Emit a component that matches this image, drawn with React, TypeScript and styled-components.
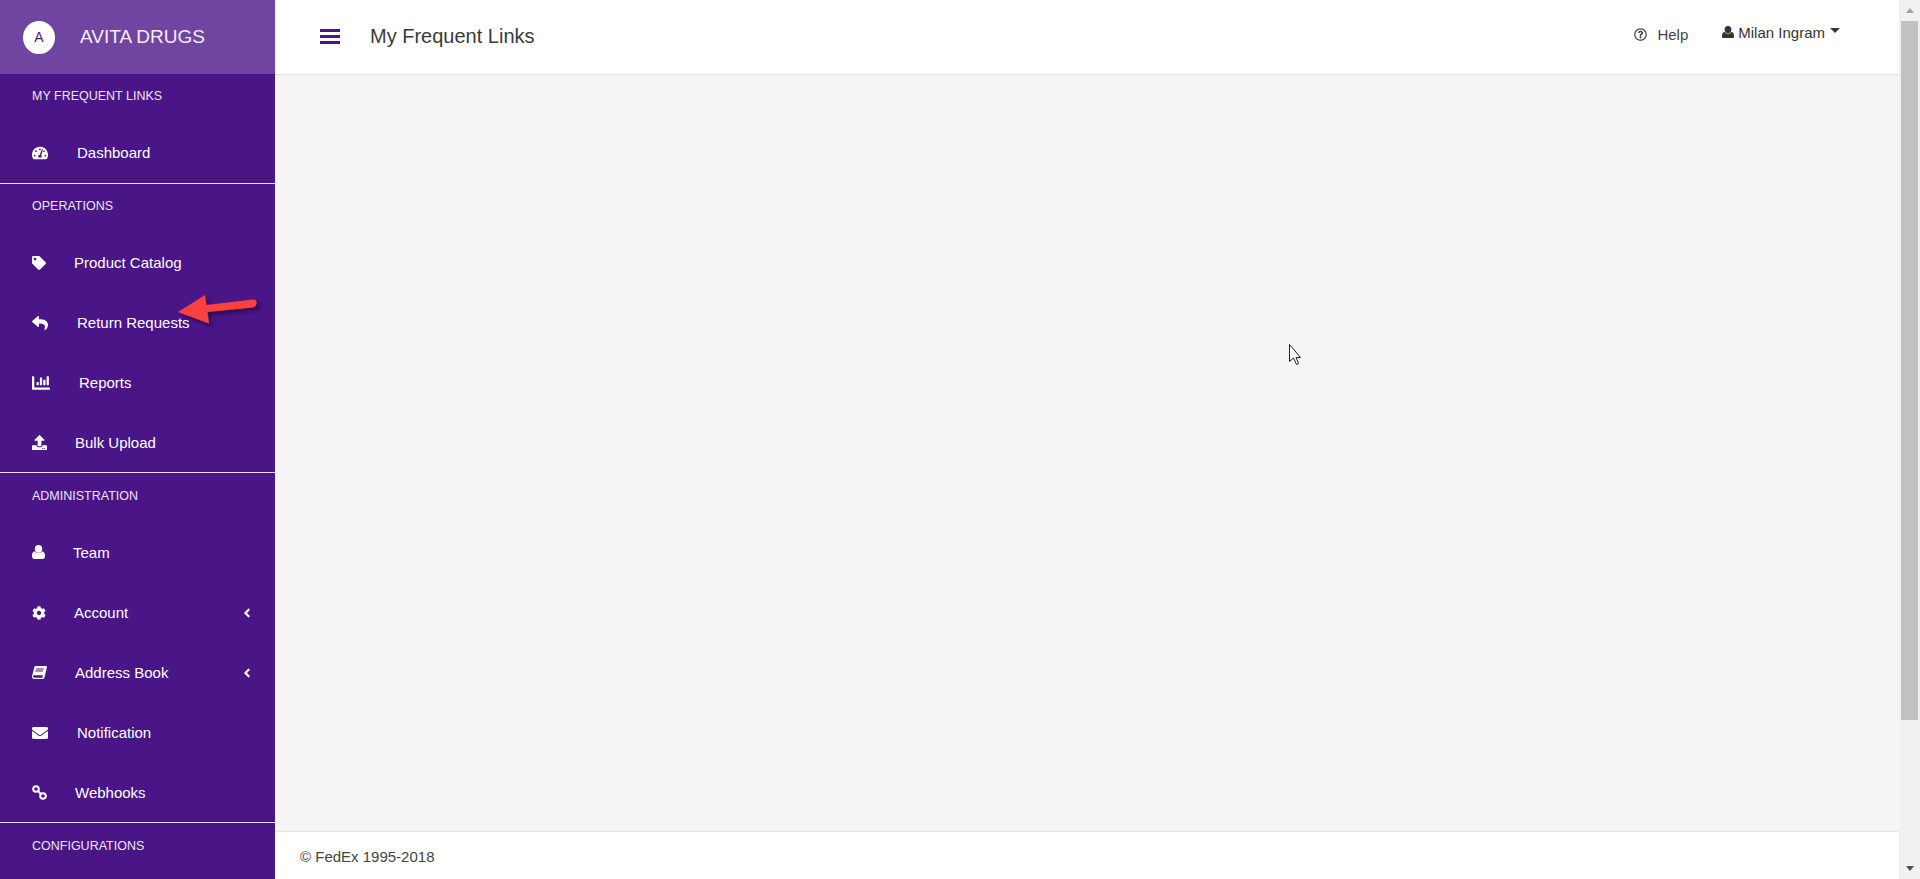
import React from "react";
import styled, { createGlobalStyle } from "styled-components";
import {
  FaTachometerAlt,
  FaTag,
  FaReply,
  FaChartBar,
  FaUpload,
  FaCog,
  FaEnvelope,
  FaAngleLeft,
  FaRegQuestionCircle,
} from "react-icons/fa";

const Global = createGlobalStyle`
  html, body { margin: 0; padding: 0; height: 879px; overflow: hidden; }
  body { font-family: "Liberation Sans", Arial, sans-serif; color: #333; }
  * { box-sizing: border-box; }
`;

const Page = styled.div`
  position: relative;
  display: grid;
  grid-template-columns: 275px 1fr 21px;
  height: 879px;
  overflow: hidden;
`;

const Sidebar = styled.aside`
  background: #4a1586;
  color: #fff;
  height: 879px;
  overflow: hidden;
`;

const Brand = styled.div`
  height: 74px;
  background: #7045a1;
  display: flex;
  align-items: center;
  padding-left: 23px;
`;

const Avatar = styled.span`
  width: 32px;
  height: 33px;
  border-radius: 50%;
  background: #fff;
  color: #4a1586;
  font-size: 14px;
  display: flex;
  align-items: center;
  justify-content: center;
  margin-right: 25px;
`;

const BrandName = styled.span`
  font-size: 19px;
  color: #f3eef8;
`;

const Section = styled.section<{ $divided?: boolean; $h?: number }>`
  height: ${(p) => (p.$h ? `${p.$h}px` : "auto")};
  border-bottom: ${(p) => (p.$divided ? "1px solid #e6dff0" : "0")};
`;

const SectionTitle = styled.div<{ $tall?: boolean }>`
  height: ${(p) => (p.$tall ? 50 : 49)}px;
  padding: ${(p) => (p.$tall ? 16 : 15)}px 0 0 32px;
  font-size: 12.5px;
  line-height: 15px;
  text-transform: uppercase;
  color: #ece6f4;
`;

const NavRow = styled.a`
  height: 60px;
  display: flex;
  align-items: center;
  padding: 0 21px 1px 32px;
  font-size: 15px;
  color: #fff;
`;

const NavIcon = styled.span<{ $w: number }>`
  width: ${(p) => p.$w}px;
  margin-right: 29px;
  flex: none;
  display: flex;
  align-items: center;
  justify-content: flex-start;
  color: #fff;
  svg { display: block; flex: none; }
`;

const NavLabel = styled.span`
  flex: 1;
`;

const Main = styled.main`
  display: flex;
  flex-direction: column;
  min-width: 0;
`;

const TopBar = styled.header`
  height: 75px;
  flex: none;
  background: #fff;
  border-bottom: 1px solid #e7e7e7;
  display: flex;
  align-items: center;
  padding-left: 45px;
`;

const Burger = styled.span`
  width: 20px;
  height: 15px;
  margin-right: 30px;
  display: flex;
  flex-direction: column;
  justify-content: space-between;
  margin-top: -1px;
`;

const BurgerBar = styled.i`
  display: block;
  height: 3px;
  background: #4a1586;
`;

const PageTitle = styled.h1`
  margin: -2px 0 0;
  font-size: 20px;
  font-weight: 400;
  color: #3a3a3a;
  flex: 1;
`;

const HelpLink = styled.a`
  display: flex;
  align-items: center;
  gap: 10px;
  font-size: 15px;
  color: #444;
  margin-right: 34px;
  margin-top: -6px;
`;

const UserMenu = styled.a`
  display: flex;
  align-items: center;
  font-size: 15px;
  color: #333;
  margin-right: 59px;
  margin-top: -10px;
`;

const UserName = styled.span`
  margin: 0 5px 0 4px;
`;

const Caret = styled.span`
  width: 0;
  height: 0;
  border-left: 5px solid transparent;
  border-right: 5px solid transparent;
  border-top: 5px solid #333;
  margin-top: -3px;
`;

const Content = styled.div`
  flex: 1;
  background: #f5f5f5;
`;

const Footer = styled.footer`
  height: 48px;
  flex: none;
  background: #fff;
  border-top: 1px solid #e7e7e7;
  padding: 16px 0 0 25px;
  font-size: 15px;
  line-height: 17px;
  color: #444;
`;

const Scrollbar = styled.div`
  background: #f1f1f1;
  display: flex;
  flex-direction: column;
  align-items: center;
`;

const ScrollButton = styled.div`
  height: 21px;
  width: 100%;
  flex: none;
  display: flex;
  align-items: center;
  justify-content: center;
`;

const ScrollThumb = styled.div`
  width: 17px;
  height: 699px;
  flex: none;
  background: #c1c1c1;
`;

const ScrollTrack = styled.div`
  flex: 1;
`;

const ArrowUp = styled.span`
  width: 0;
  height: 0;
  border-left: 4.5px solid transparent;
  border-right: 4.5px solid transparent;
  border-bottom: 5px solid #a3a3a3;
`;

const ArrowDown = styled.span`
  width: 0;
  height: 0;
  border-left: 4.5px solid transparent;
  border-right: 4.5px solid transparent;
  border-top: 5px solid #505050;
`;

const Annotation = styled.svg`
  position: absolute;
  left: 170px;
  top: 285px;
  overflow: visible;
`;

const Pointer = styled.svg`
  position: absolute;
  left: 1288px;
  top: 343px;
`;

const BookIcon = ({ size = 15 }: { size?: number }) => (
  <svg width={size} height={size * 0.87} viewBox="0 0 15 13" fill="currentColor">
    <path d="M3.4 0H14a1 1 0 0 1 .9 1.2L12.5 11.4a2 2 0 0 1-1.9 1.6H2C.7 13 0 11.9 0 10.6c0-.4.1-.8.2-1.1L2.4 1A1.3 1.3 0 0 1 3.4 0zM4.2 2.4l-.3 1h7.6l.3-1zM3.5 4.6l-.3 1h7.6l.3-1zM2.4 9.3c-.9 0-1.3.5-1.3 1.2 0 .7.4 1.2 1.2 1.2h8.1l.5-2.4z" fillRule="evenodd" />
  </svg>
);

const LinkIcon = ({ size = 15 }: { size?: number }) => (
  <svg width={size} height={size} viewBox="0 0 15 15" fill="none" stroke="currentColor" strokeWidth="2">
    <circle cx="4" cy="4" r="2.8" />
    <circle cx="11" cy="11" r="2.8" />
    <path d="M5.8 5.8l3.4 3.4" />
  </svg>
);

const BustIcon = ({ width = 13, color = "currentColor" }: { width?: number; color?: string }) => (
  <svg width={width} height={width * 1.08} viewBox="0 0 13 14" fill={color}>
    <ellipse cx="6.5" cy="3.9" rx="3.7" ry="3.9" />
    <path d="M0 11.3C0 8.6.8 6.6 2.7 6.6c.9 1 2.2 1.7 3.8 1.7s2.9-.7 3.8-1.7c1.9 0 2.7 2 2.7 4.7 0 1.6-1 2.7-2.4 2.7H2.4C1 14 0 12.9 0 11.3z" />
  </svg>
);

type Item = { label: string; w: number; icon: React.ReactNode; more?: boolean };
type Group = { title: string; items: Item[]; divided?: boolean; h?: number; tall?: boolean };

const groups: Group[] = [
  {
    title: "My Frequent Links",
    divided: true,
    h: 110,
    items: [{ label: "Dashboard", w: 16, icon: <FaTachometerAlt size={16} /> }],
  },
  {
    title: "Operations",
    divided: true,
    h: 289,
    items: [
      { label: "Product Catalog", w: 13, icon: <FaTag size={14} /> },
      { label: "Return Requests", w: 16, icon: <FaReply size={16} /> },
      { label: "Reports", w: 18, icon: <FaChartBar size={18} /> },
      { label: "Bulk Upload", w: 14, icon: <FaUpload size={15} /> },
    ],
  },
  {
    title: "Administration",
    tall: true,
    divided: true,
    h: 350,
    items: [
      { label: "Team", w: 12, icon: <BustIcon /> },
      { label: "Account", w: 13, icon: <FaCog size={14} />, more: true },
      { label: "Address Book", w: 14, icon: <BookIcon />, more: true },
      { label: "Notification", w: 16, icon: <FaEnvelope size={16} /> },
      { label: "Webhooks", w: 14, icon: <LinkIcon /> },
    ],
  },
  { title: "Configurations", tall: true, items: [] },
];

export default function App() {
  return (
    <>
      <Global />
      <Page>
        <Sidebar>
          <Brand>
            <Avatar>A</Avatar>
            <BrandName>AVITA DRUGS</BrandName>
          </Brand>
          {groups.map((g) => (
            <Section key={g.title} $divided={g.divided} $h={g.h}>
              <SectionTitle $tall={g.tall}>{g.title}</SectionTitle>
              {g.items.map((it) => (
                <NavRow key={it.label}>
                  <NavIcon $w={it.w}>{it.icon}</NavIcon>
                  <NavLabel>{it.label}</NavLabel>
                  {it.more && <FaAngleLeft size={14} />}
                </NavRow>
              ))}
            </Section>
          ))}
        </Sidebar>
        <Main>
          <TopBar>
            <Burger>
              <BurgerBar />
              <BurgerBar />
              <BurgerBar />
            </Burger>
            <PageTitle>My Frequent Links</PageTitle>
            <HelpLink>
              <FaRegQuestionCircle size={13} />
              Help
            </HelpLink>
            <UserMenu>
              <BustIcon width={12} color="#333" />
              <UserName>Milan Ingram</UserName>
              <Caret />
            </UserMenu>
          </TopBar>
          <Content />
          <Footer>© FedEx 1995-2018</Footer>
        </Main>
        <Scrollbar>
          <ScrollButton>
            <ArrowUp />
          </ScrollButton>
          <ScrollThumb />
          <ScrollTrack />
          <ScrollButton>
            <ArrowDown />
          </ScrollButton>
        </Scrollbar>
        <Annotation width="90" height="42" viewBox="0 0 90 42">
          <defs>
            <filter id="arrowShadow" x="-20%" y="-30%" width="150%" height="170%">
              <feDropShadow dx="3" dy="3" stdDeviation="2" floodColor="#1c0630" floodOpacity="0.6" />
            </filter>
          </defs>
          <path
            d="M8 27 L35 10 L36.5 20 L83 14.5 Q87 14.5 86.5 18.5 Q86 22 82 22.5 L37.5 27 L39 38.5 Z"
            fill="#fb3f41"
            filter="url(#arrowShadow)"
          />
        </Annotation>
        <Pointer width="14" height="24" viewBox="0 0 14 24">
          <path d="M1.5 1.5V18.5L5.5 15L8.5 21.5L10.5 20.5L8 14.5H12.5Z" fill="#fff" stroke="#222" strokeWidth="1" />
        </Pointer>
      </Page>
    </>
  );
}
